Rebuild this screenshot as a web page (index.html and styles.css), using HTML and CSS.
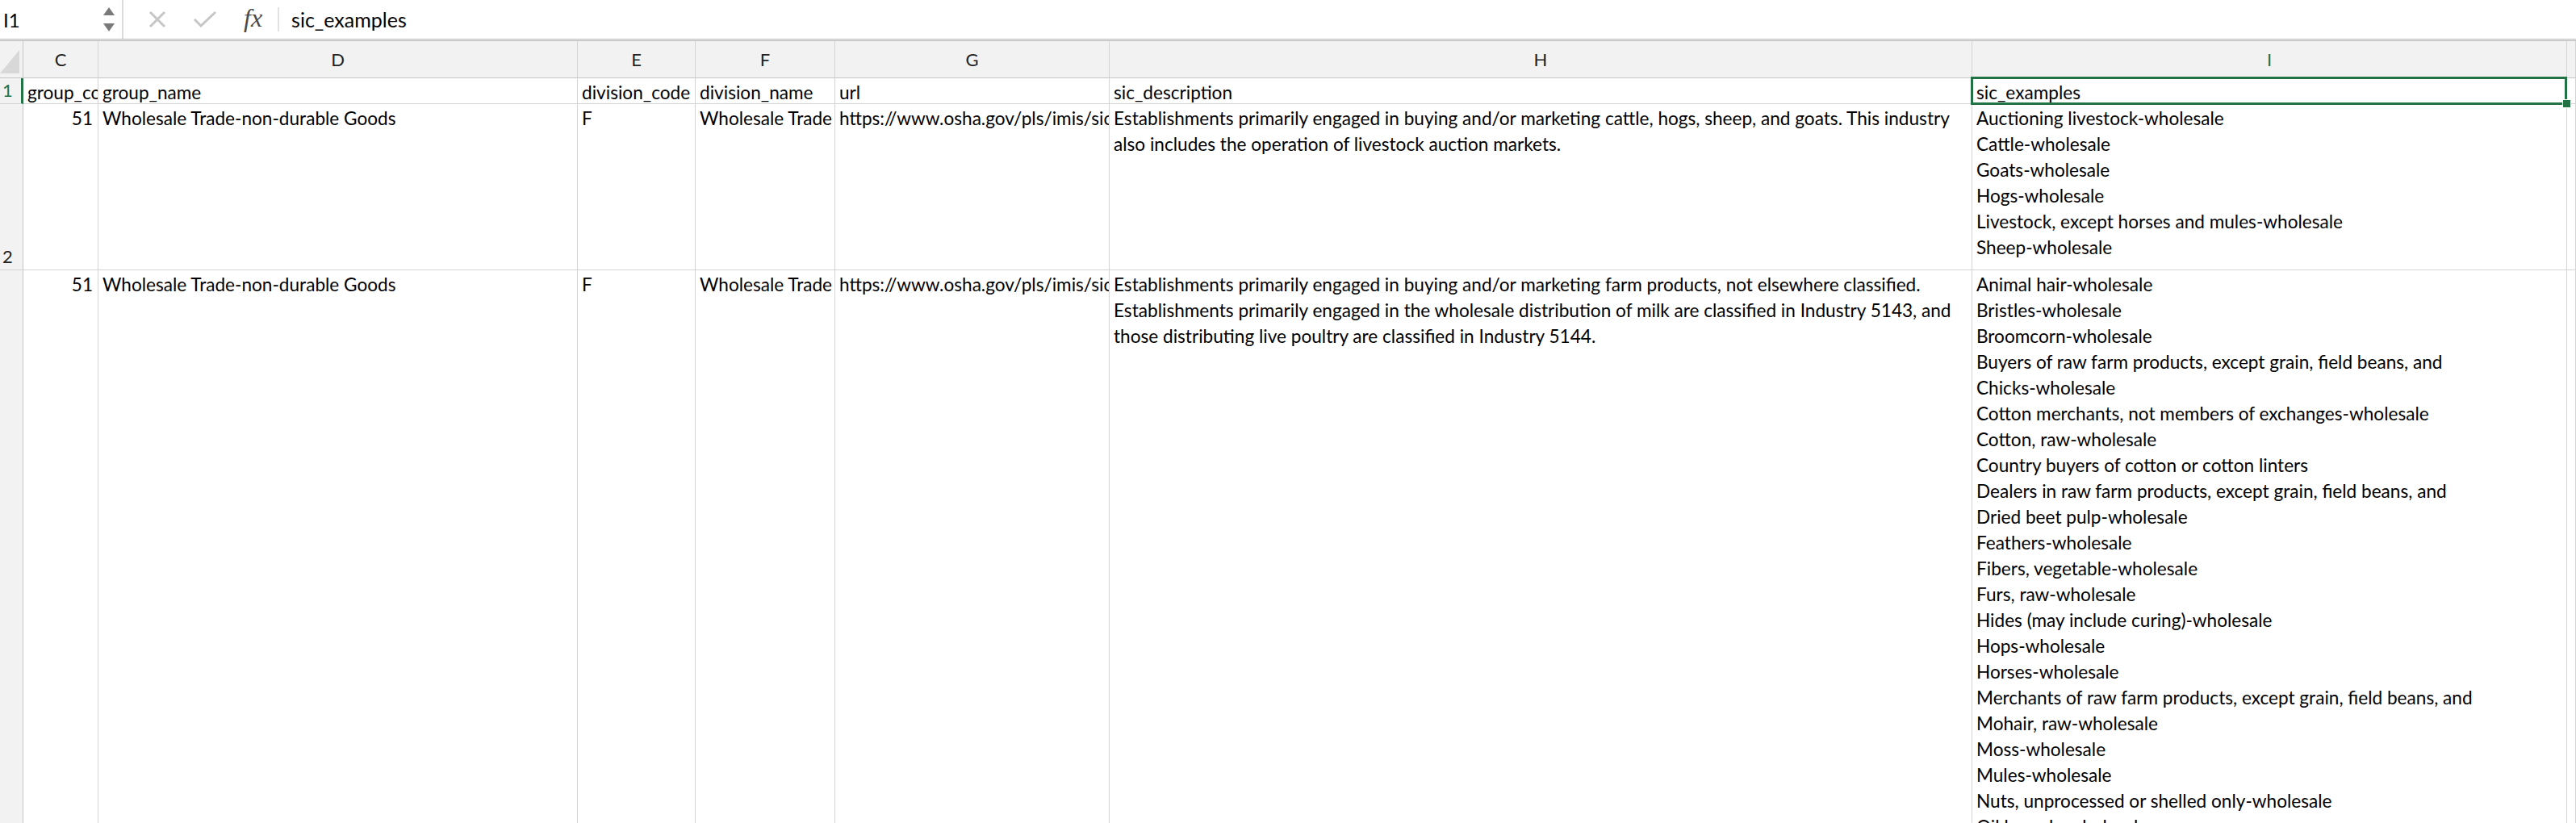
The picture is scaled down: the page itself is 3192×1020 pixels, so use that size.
FILE: index.html
```html
<!DOCTYPE html>
<html>
<head>
<meta charset="utf-8">
<link rel="stylesheet" href="styles.css">
</head>
<body>
<div class="fbar">
  <div class="namebox">
    <span class="ref">I1</span>
    <span class="spin">
      <svg width="14" height="10" viewBox="0 0 14 10"><path d="M7 0 L14 10 L0 10 Z" fill="#7a7a7a"/></svg>
      <svg width="14" height="10" viewBox="0 0 14 10"><path d="M0 0 L14 0 L7 10 Z" fill="#7a7a7a"/></svg>
    </span>
  </div>
  <svg class="ico-x" width="22" height="22" viewBox="0 0 22 22"><path d="M2 2 L20 20 M20 2 L2 20" stroke="#c6c6c6" stroke-width="3" fill="none"/></svg>
  <svg class="ico-ok" width="30" height="22" viewBox="0 0 30 22"><path d="M2 11 L10 19 L28 2" stroke="#c6c6c6" stroke-width="3" fill="none"/></svg>
  <span class="fx">fx</span>
  <span class="fsep"></span>
  <span class="ftext">sic_examples</span>
</div>
<div class="sheet">
  <div class="corner"><span class="tri"></span></div>
  <div class="ch">C</div>
  <div class="ch">D</div>
  <div class="ch">E</div>
  <div class="ch">F</div>
  <div class="ch">G</div>
  <div class="ch">H</div>
  <div class="ch ch-sel">I</div>
  <div class="ch"></div>

  <div class="rh rh-sel">1</div>
  <div class="cell"><span class="clip">group_code</span></div>
  <div class="cell">group_name</div>
  <div class="cell">division_code</div>
  <div class="cell">division_name</div>
  <div class="cell">url</div>
  <div class="cell">sic_description</div>
  <div class="cell selcell">sic_examples<span class="handle"></span></div>
  <div class="cell"></div>

  <div class="rh rh-tall">2</div>
  <div class="cell num">51</div>
  <div class="cell">Wholesale Trade-non-durable Goods</div>
  <div class="cell">F</div>
  <div class="cell">Wholesale Trade</div>
  <div class="cell"><span class="clip">https://www.osha.gov/pls/imis/sic_manual.display?id=1&amp;tab=description</span></div>
  <div class="cell">Establishments primarily engaged in buying and/or marketing cattle, hogs, sheep, and goats. This industry<br>also includes the operation of livestock auction markets.</div>
  <div class="cell">Auctioning livestock-wholesale<br>Cattle-wholesale<br>Goats-wholesale<br>Hogs-wholesale<br>Livestock, except horses and mules-wholesale<br>Sheep-wholesale</div>
  <div class="cell"></div>

  <div class="rh"></div>
  <div class="cell num">51</div>
  <div class="cell">Wholesale Trade-non-durable Goods</div>
  <div class="cell">F</div>
  <div class="cell">Wholesale Trade</div>
  <div class="cell"><span class="clip">https://www.osha.gov/pls/imis/sic_manual.display?id=2&amp;tab=description</span></div>
  <div class="cell">Establishments primarily engaged in buying and/or marketing farm products, not elsewhere classified.<br>Establishments primarily engaged in the wholesale distribution of milk are classified in Industry 5143, and<br>those distributing live poultry are classified in Industry 5144.</div>
  <div class="cell">Animal hair-wholesale<br>Bristles-wholesale<br>Broomcorn-wholesale<br>Buyers of raw farm products, except grain, field beans, and<br>Chicks-wholesale<br>Cotton merchants, not members of exchanges-wholesale<br>Cotton, raw-wholesale<br>Country buyers of cotton or cotton linters<br>Dealers in raw farm products, except grain, field beans, and<br>Dried beet pulp-wholesale<br>Feathers-wholesale<br>Fibers, vegetable-wholesale<br>Furs, raw-wholesale<br>Hides (may include curing)-wholesale<br>Hops-wholesale<br>Horses-wholesale<br>Merchants of raw farm products, except grain, field beans, and<br>Mohair, raw-wholesale<br>Moss-wholesale<br>Mules-wholesale<br>Nuts, unprocessed or shelled only-wholesale<br>Oil kernels-wholesale<br>Oilseeds-wholesale</div>
  <div class="cell"></div>
</div>
</body>
</html>
```
FILE: styles.css
```css
html, body {
  margin: 0;
  padding: 0;
  background: #ffffff;
}
body {
  width: 3192px;
  height: 1020px;
  overflow: hidden;
  font-family: Lato, "Open Sans", sans-serif;
  color: #000;
}
.fbar {
  height: 48px;
  display: flex;
  align-items: center;
  border-bottom: 3px double #b4b4b4;
  background: #fff;
}
.namebox {
  width: 153px;
  height: 48px;
  box-sizing: border-box;
  border-right: 2px solid #dcdcdc;
  display: flex;
  align-items: center;
  justify-content: space-between;
  padding: 0 9px 0 4px;
  font-size: 24px;
}
.spin {
  display: flex;
  flex-direction: column;
  gap: 10px;
}
.spin svg { display: block; }
.ico-x { margin-left: 31px; display: block; }
.ico-ok { margin-left: 33px; display: block; }
.fx {
  margin-left: 33px;
  font-family: "Liberation Serif", "DejaVu Serif", serif;
  font-style: italic;
  font-size: 32px;
  color: #4a4a4a;
  line-height: 1;
  position: relative;
  top: -2px;
}
.fsep {
  margin-left: 19px;
  width: 2px;
  height: 30px;
  background: #e2e2e2;
}
.ftext {
  margin-left: 15px;
  font-size: 25px;
}
.sheet {
  display: grid;
  grid-template-columns: 29px 93px 594px 146px 173px 340px 1069px 737px 11px;
  grid-template-rows: 46px 32px 206px 700px;
  font-size: 22.6px;
  line-height: 32px;
}
.corner {
  background: #f2f2f2;
  border-right: 1px solid #c6c6c6;
  border-bottom: 1px solid #c6c6c6;
  position: relative;
}
.tri {
  position: absolute;
  left: 0;
  top: 11px;
  width: 0;
  height: 0;
  border-left: 24px solid transparent;
  border-bottom: 29px solid #d8d8d8;
}
.ch {
  background: #f2f2f2;
  border-right: 1px solid #d4d4d4;
  border-bottom: 1px solid #c6c6c6;
  text-align: center;
  line-height: 46px;
  font-size: 22px;
  color: #222;
}
.ch-sel { color: #217346; }
.rh {
  background: #f2f2f2;
  border-right: 1px solid #c6c6c6;
  border-bottom: 1px solid #d4d4d4;
  padding-left: 3px;
  font-size: 22px;
  color: #222;
  display: flex;
  align-items: flex-end;
  overflow: hidden;
}
.rh-sel {
  color: #217346;
  border-right: 3px solid #217346;
}
.cell {
  border-right: 1px solid #d4d4d4;
  border-bottom: 1px solid #d4d4d4;
  padding: 2px 5px 0 5px;
  white-space: nowrap;
  overflow: hidden;
  box-sizing: border-box;
}
.clip {
  display: block;
  overflow: hidden;
  margin-right: -5px;
}
.num {
  text-align: right;
  padding-right: 6px;
}
.selcell {
  position: relative;
  overflow: visible;
}
.selcell::after {
  content: "";
  position: absolute;
  left: -2px;
  top: -2px;
  right: -1px;
  bottom: -2px;
  border: 3px solid #217346;
  pointer-events: none;
}
.handle {
  position: absolute;
  right: -6px;
  bottom: -6px;
  width: 9px;
  height: 9px;
  background: #217346;
  border: 1px solid #fff;
  z-index: 3;
}
```
